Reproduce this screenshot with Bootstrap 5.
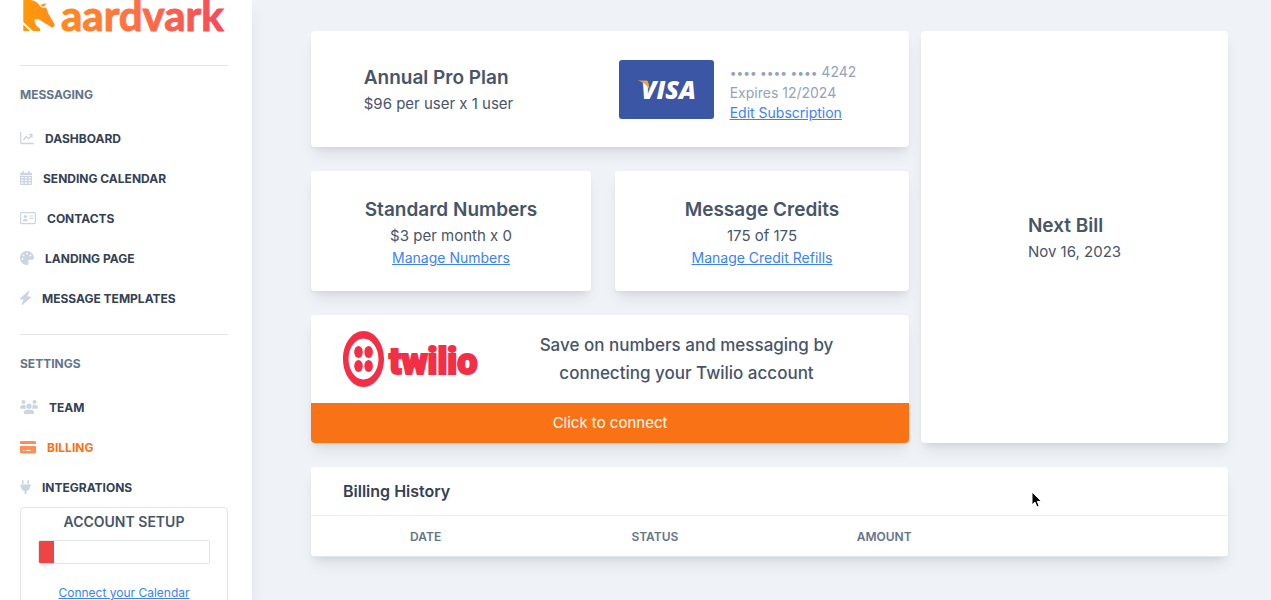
<!DOCTYPE html>
<html lang="en">
<head>
<meta charset="utf-8">
<meta name="viewport" content="width=device-width, initial-scale=1">
<title>Aardvark – Billing</title>
<link href="https://cdn.jsdelivr.net/npm/bootstrap@5.3.0/dist/css/bootstrap.min.css" rel="stylesheet">
<style>
  body { font-family: Inter, "Liberation Sans", sans-serif; background: #eff3f8; color: #475569; }
  a { color: #3b82f6; }
  .sidebar { width: 252px; padding: 0 24px 0 20px; box-shadow: 0 10px 15px -3px rgba(71, 85, 105, .14); z-index: 1; }
  .brand { height: 32px; margin-bottom: 33px; overflow: visible; }
  .rule { height: 1px; background: #e2e5e9; }
  .side-title { font-size: 12px; line-height: 16px; font-weight: 700; color: #64748b; margin: 21px 0 15px; }
  .side-link { height: 40px; padding-top: 2px; gap: 11px; font-size: 12px; font-weight: 700; color: #334155; text-decoration: none; }
  .side-link svg { color: #cbd5e1; height: 14px; margin-bottom: 3px; }
  .side-link.active { color: #f97316; }
  .side-link.active svg { color: #fd8f56; }
  .setup { border: 1px solid #e2e5e9; border-radius: 4px; padding: 4px 17px 16px; }
  .setup h2 { font-size: 14px; line-height: 20px; font-weight: 600; margin: 0 0 8px; }
  .setup .progress { height: 24px; border: 1px solid #e2e5e9; border-radius: 2px; background: #fff; --bs-progress-bar-bg: #ef4444; }
  .setup .tick { width: 0; border: 7px solid transparent; border-bottom: 0; border-top: 4px solid #f0f0f0; }
  .setup a { font-size: 12px; line-height: 16px; margin-top: 17px; }
  .content { padding: 31px 43px 24px 59px; }
  .board { display: grid; grid-template-columns: 598fr 307fr; gap: 12px; }
  .pair { display: grid; grid-template-columns: 280fr 294fr; gap: 24px; }
  .panel { background: #fff; border-radius: 4px; box-shadow: 0 10px 15px -3px rgba(0, 0, 0, .08), 0 4px 6px -2px rgba(0, 0, 0, .07); }
  .panel h2 { font-size: 19px; line-height: 28px; font-weight: 600; margin: 0; }
  .panel p { font-size: 15px; line-height: 24px; margin: 0; }
  .summary { padding-top: 2px; }
  .fine { font-size: 14px; line-height: 20px; }
  .muted { color: #94a3b8; padding-top: 6px; }
  .dots { font-size: 12px; }
  .plan { min-height: 116px; }
  .tile { min-height: 120px; padding-top: 25px; }
  .offer { padding: 16px 32px; }
  .panel .offer p { font-size: 17px; line-height: 28px; font-weight: 500; }
  .connect { height: 40px; background: #f97316; color: #fff; border: 0; border-radius: 0 0 4px 4px; font-size: 15px; padding-top: 2px; }
  .panel.history h2 { font-size: 16px; line-height: 24px; color: #334155; padding: 12px 32px; }
  .history table { table-layout: fixed; border-top: 1px solid #eceff2; border-bottom: 1px solid #e2e8f0; }
  .history th { font-size: 12px; line-height: 16px; font-weight: 600; color: #64748b; padding: 13px 0 11px; text-align: center; }
  .pointer { position: absolute; left: 78.5%; top: 24px; }
</style>
</head>
<body>
<div class="d-flex vh-100 overflow-hidden">
  <nav class="sidebar bg-white flex-shrink-0 position-relative" aria-label="Main">
    <svg class="brand d-block" width="208" height="32" viewBox="0 0 208 32" role="img" aria-label="aardvark">
      <defs>
        <linearGradient id="flame" gradientUnits="userSpaceOnUse" x1="0" y1="0" x2="208" y2="0">
          <stop offset="0" stop-color="#ff9a08"/><stop offset=".5" stop-color="#ff7440"/><stop offset="1" stop-color="#f7485c"/>
        </linearGradient>
      </defs>
      <g fill="url(#flame)">
        <path d="M3.300 0h7c4 .3 6.500 2 8.700 4.500C20 7 22 8 26 7.500l1 2 1 3.500 6.500 11c.5 2-.8 3.800-3 3.300l-6.500-4-7-4.500-3.500 1c0 4 2 6.500 5.500 9V31H13L3.300 22z"/>
        <path d="M3.300 24.500 10 31H3.300zM20 5l6.500-2-3 4z"/>
        <text x="41" y="31" font-family="Lato, sans-serif" font-weight="700" font-size="42" stroke="url(#flame)">aardvark</text>
      </g>
    </svg>
    <div class="rule"></div>
    <h2 class="side-title">MESSAGING</h2>
    <a class="side-link d-flex align-items-center" href="#">
      <svg width="14" viewBox="0 0 14 14" fill="none" stroke="currentColor" stroke-linecap="round" stroke-linejoin="round" stroke-width="1.300"><path d="M.7 1.500v10q0 1 1 1h11.600M3.700 8.500l2.500-3 2.500 2.300 3.200-4M9.500 3.500H12V6"/></svg>DASHBOARD</a>
    <a class="side-link d-flex align-items-center" href="#">
      <svg width="12" viewBox="0 0 12 14"><path fill="currentColor" d="M3 0c.6 0 .9.400.9.900v.9h4.200V.900a.9.900 0 0 1 1.800 0v.9h.8c.7 0 1.300.600 1.300 1.300v1.200H0V3.100c0-.7.600-1.300 1.300-1.300h.8V.900C2.100.400 2.500 0 3 0zM0 5h12v7.700c0 .7-.6 1.300-1.300 1.300H1.300C.6 14 0 13.400 0 12.700z"/><path d="M1.200 6.600h2.200m1.500 0h2.200m1.500 0h2.200M1.200 9.300h2.200m1.500 0h2.200m1.500 0h2.200M1.200 12h2.200m1.500 0h2.200m1.500 0h2.200" stroke="#fff" stroke-width="1.300"/></svg>SENDING CALENDAR</a>
    <a class="side-link d-flex align-items-center" href="#">
      <svg width="16" viewBox="0 0 16 14"><rect x=".6" y="1.600" width="14.800" height="11" rx="1.300" fill="none" stroke="currentColor" stroke-width="1.200"/><g fill="currentColor"><circle cx="5.300" cy="5.500" r="1.600"/><path d="M2.800 10.300c0-1.500.8-2.300 2-2.300h1c1.200 0 2 .800 2 2.300zM9.500 4.500h3.800v1H9.500zM9.500 7h3.800v1H9.500z"/></g></svg>CONTACTS</a>
    <a class="side-link d-flex align-items-center" href="#">
      <svg width="14" viewBox="0 0 512 512"><path fill="currentColor" d="M512 256c0 .9 0 1.800 0 2.700c-.4 36.500-33.600 61.300-70.100 61.300H344c-26.500 0-48 21.500-48 48c0 3.400 .4 6.700 1 9.900c2.100 10.200 6.500 20 10.800 29.900c6.100 13.800 12.100 27.500 12.100 42c0 31.800-21.600 60.700-53.400 62c-3.500 .1-7 .2-10.600 .2C114.600 512 0 397.400 0 256S114.600 0 256 0S512 114.600 512 256zM128 288a32 32 0 1 0-64 0 32 32 0 1 0 64 0zm0-96a32 32 0 1 0 0-64 32 32 0 1 0 0 64zM288 96a32 32 0 1 0-64 0 32 32 0 1 0 64 0zm96 96a32 32 0 1 0 0-64 32 32 0 1 0 0 64z"/></svg>LANDING PAGE</a>
    <a class="side-link d-flex align-items-center" href="#">
      <svg width="11" viewBox="0 0 11 14"><path fill="currentColor" d="M8 .2C8.600-.2 9.400.3 9.100 1L7.300 5.500h3c.7 0 .9.700.4 1.200l-8 7.100c-.6.400-1.300 0-1-.7L3.600 8.500H.6c-.7 0-.9-.7-.4-1.200z"/></svg>MESSAGE TEMPLATES</a>
    <div class="rule mt-3"></div>
    <h2 class="side-title">SETTINGS</h2>
    <a class="side-link d-flex align-items-center" href="#">
      <svg width="18" viewBox="0 0 18 14" fill="currentColor"><circle cx="3.500" cy="2.100" r="2"/><circle cx="14.500" cy="2.100" r="2"/><circle cx="9" cy="6.200" r="2.600"/><path d="M0 8.200C0 6.200 1.200 5 2.700 5h1.600c.5 0 .9.100 1.200.3-.3 1.300.1 2.500.9 3.400H.5c-.3 0-.5-.2-.5-.5zM18 8.200C18 6.200 16.800 5 15.300 5h-1.600c-.5 0-.9.100-1.200.3.3 1.300-.1 2.500-.9 3.400h5.900c.3 0 .5-.2.5-.5zM3.800 13.300c0-2.200 1.400-3.500 3.300-3.500h3.800c1.900 0 3.300 1.300 3.300 3.500 0 .400-.3.700-.7.700h-9c-.4 0-.7-.3-.7-.7z"/></svg>TEAM</a>
    <a class="side-link active d-flex align-items-center" href="#" aria-current="page">
      <svg width="16" viewBox="0 0 16 14"><path fill="currentColor" d="M1.400 1h13.200c.8 0 1.400.600 1.400 1.400V4H0V2.400C0 1.600.6 1 1.400 1zM0 6h16v6.100c0 .8-.6 1.400-1.400 1.400H1.400C.6 13.500 0 12.900 0 12.100z"/><path d="M3 10.500h1.500M6 10.500h4.500" stroke="#fff"/></svg>BILLING</a>
    <a class="side-link d-flex align-items-center" href="#">
      <svg width="11" viewBox="0 0 11 14"><path fill="currentColor" d="M2 .9a.8.800 0 0 1 1.600 0V4H2zM7.400.900a.8.800 0 0 1 1.600 0V4H7.400zM.6 4.600h9.800c.8 0 .8 1.400 0 1.400H10v1c0 2-1.500 3.600-3.600 4.100V14H4.600v-2.900C2.500 10.600 1 9 1 7V6H.6c-.8 0-.8-1.400 0-1.400z"/></svg>INTEGRATIONS</a>
    <section class="setup text-center">
      <h2>ACCOUNT SETUP</h2>
      <div class="progress" role="progressbar" aria-label="Account setup" aria-valuenow="9" aria-valuemin="0" aria-valuemax="100"><div class="progress-bar" style="width: 9%"></div></div>
      <div class="tick"></div>
      <a class="d-block" href="#">Connect your Calendar</a>
    </section>
  </nav>

  <main class="content flex-grow-1 overflow-hidden">
    <div class="board mb-4">
      <div class="d-flex flex-column gap-4">
        <section class="panel plan d-flex align-items-center justify-content-around">
          <div class="summary">
            <h2>Annual Pro Plan</h2>
            <p>$96 per user x 1 user</p>
          </div>
          <div class="d-flex align-items-center gap-3">
            <svg width="95" height="59" viewBox="0 0 95 59" role="img" aria-label="Visa">
              <rect width="95" height="59" rx="3" fill="#3a56a5"/>
              <text x="22" y="39" font-family="Open Sans, sans-serif" font-weight="800" font-style="italic" font-size="25" fill="#fff">VISA</text>
              <path d="M18.500 20.500h8c1.500 0 2.500.500 2.800 2l1.700 8c-2-4.500-6-8.500-12.500-10z" fill="#f2a341"/>
            </svg>
            <div class="fine muted">
              <div><span class="dots">•••• •••• ••••</span> 4242</div>
              <div>Expires 12/2024</div>
              <a href="#">Edit Subscription</a>
            </div>
          </div>
        </section>
        <div class="pair">
          <section class="panel tile text-center">
            <h2>Standard Numbers</h2>
            <p>$3 per month x 0</p>
            <a class="fine d-block" href="#">Manage Numbers</a>
          </section>
          <section class="panel tile text-center">
            <h2>Message Credits</h2>
            <p>175 of 175</p>
            <a class="fine d-block" href="#">Manage Credit Refills</a>
          </section>
        </div>
        <section class="panel">
          <div class="offer d-flex align-items-center">
            <svg class="flex-shrink-0" width="137" height="56" viewBox="0 0 137 56" role="img" aria-label="twilio">
              <g fill="#f22f46">
                <path fill-rule="evenodd" d="M20.500 0C31.800 0 41 12.500 41 28S31.800 56 20.500 56 0 43.500 0 28 9.200 0 20.500 0zm0 7.500C12.300 7.500 5.500 16.700 5.500 28s6.800 20.500 15 20.500 15-9.200 15-20.500-6.800-20.500-15-20.500z"/>
                <ellipse cx="15.500" cy="21" rx="4.300" ry="6"/><ellipse cx="25.600" cy="21" rx="4.300" ry="6"/>
                <ellipse cx="15.500" cy="35" rx="4.300" ry="6"/><ellipse cx="25.600" cy="35" rx="4.300" ry="6"/>
                <text x="46" y="43" font-family="Roboto, sans-serif" font-weight="900" font-size="36" stroke="#f22f46" stroke-width="2">twilio</text>
              </g>
            </svg>
            <p class="flex-grow-1 text-center ms-3">Save on numbers and messaging by<br>connecting your Twilio account</p>
          </div>
          <button type="button" class="connect d-block w-100">Click to connect</button>
        </section>
      </div>
      <section class="panel d-flex align-items-center justify-content-center">
        <div class="summary">
          <h2>Next Bill</h2>
          <p>Nov 16, 2023</p>
        </div>
      </section>
    </div>
    <section class="panel history position-relative">
      <h2>Billing History</h2>
      <table class="w-100">
        <thead><tr><th scope="col">DATE</th><th scope="col">STATUS</th><th scope="col">AMOUNT</th><td></td></tr></thead>
      </table>
      <svg class="pointer" width="12" height="18" viewBox="-1 -1 12 18"><path d="M0 0v13l3-2.800 2 4.800 2.200-1-2-4.600h4.300z" fill="#000" stroke="#fff"/></svg>
    </section>
  </main>
</div>
<script src="https://cdn.jsdelivr.net/npm/bootstrap@5.3.0/dist/js/bootstrap.bundle.min.js"></script>
</body>
</html>
